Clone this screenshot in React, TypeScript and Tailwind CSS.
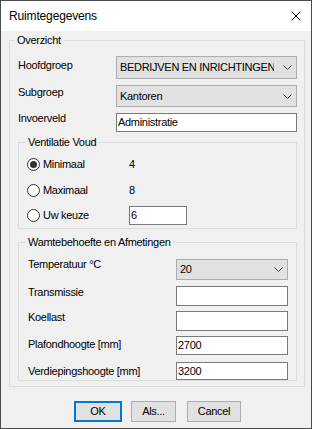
import React from 'react'

function Chevron() {
  return (
    <svg width="9" height="5" viewBox="0 0 9 5" className="mr-[4px] shrink-0">
      <polyline points="0.5,0.5 4.5,4.5 8.5,0.5" fill="none" stroke="#404040" strokeWidth="1" />
    </svg>
  )
}

function Combo({ value, className }: { value: string; className: string }) {
  return (
    <div className={`flex items-center border border-[#adadad] bg-[#e1e1e1] ${className}`}>
      <span className="min-w-0 flex-1 overflow-hidden whitespace-nowrap pl-[3px] mr-[9px]">{value}</span>
      <Chevron />
    </div>
  )
}

function TextBox({ value = '', className }: { value?: string; className: string }) {
  return (
    <div className={`flex items-center border border-[#7a7a7a] bg-white pl-[1px] ${className}`}>
      {value}
    </div>
  )
}

function Radio({ label, checked }: { label: string; checked?: boolean }) {
  return (
    <div className="flex w-[102px] items-center gap-[3px]">
      <div className="flex h-[13px] w-[13px] items-center justify-center rounded-full border border-[#333333] bg-white">
        {checked && <div className="h-[7px] w-[7px] rounded-full bg-[#333333]" />}
      </div>
      <span>{label}</span>
    </div>
  )
}

function Button({ label, width, primary }: { label: string; width: string; primary?: boolean }) {
  return (
    <div
      className={`flex h-[21px] items-center justify-center bg-[#e1e1e1] ${width} ${
        primary ? 'border-2 border-[#0078d7]' : 'border border-[#adadad]'
      }`}
    >
      {label}
    </div>
  )
}

export default function App() {
  return (
    <div className="flex h-[429px] w-[312px] flex-col border border-[#4a4a4a] bg-[#f0f0f0] font-['Liberation_Sans',Arial,sans-serif] text-[11px] leading-[13px] tracking-[-0.3px] text-black">
      {/* Title bar */}
      <div className="flex h-[30px] shrink-0 items-center bg-white pl-[8px] pr-[10px]">
        <span className="text-[12px] tracking-[-0.15px]">Ruimtegegevens</span>
        <svg width="10" height="10" viewBox="0 0 10 10" className="ml-auto">
          <path d="M0.5 0.5 L9.5 9.5 M9.5 0.5 L0.5 9.5" stroke="#000" strokeWidth="1" />
        </svg>
      </div>

      {/* Overzicht */}
      <fieldset className="ml-[8px] mt-[3px] w-[296px] border border-[#dcdcdc]">
        <legend className="ml-[5px] px-[2px]">Overzicht</legend>
        <div className="pb-[5px] pl-[8px] pt-[9px]">
          <div className="flex items-start">
            <span className="mt-[3px] w-[98px]">Hoofdgroep</span>
            <Combo value="BEDRIJVEN EN INRICHTINGEN" className="h-[23px] w-[181px]" />
          </div>
          <div className="mt-[6px] flex items-start">
            <span className="mt-[1px] w-[98px]">Subgroep</span>
            <Combo value="Kantoren" className="h-[22px] w-[181px]" />
          </div>
          <div className="mt-[6px] flex items-start">
            <span className="-mt-px w-[98px]">Invoerveld</span>
            <TextBox value="Administratie" className="h-[19px] w-[181px]" />
          </div>

          {/* Ventilatie Voud */}
          <fieldset className="mt-[4px] w-[279px] border border-[#dcdcdc]">
            <legend className="ml-[7px] px-[2px]">Ventilatie Voud</legend>
            <div className="pt-[3px]">
              <div className="flex h-[25px] items-center pl-[8px]">
                <Radio label="Minimaal" checked />
                <span>4</span>
              </div>
              <div className="flex h-[26px] items-center pl-[8px]">
                <Radio label="Maximaal" />
                <span>8</span>
              </div>
              <div className="flex h-[25px] items-center pl-[8px]">
                <Radio label="Uw keuze" />
                <TextBox value="6" className="h-[19px] w-[58px]" />
              </div>
            </div>
          </fieldset>

          {/* Warmtebehoefte */}
          <fieldset className="mt-[7px] w-[279px] border border-[#dcdcdc]">
            <legend className="ml-[7px] px-[2px]">Wamtebehoefte en Afmetingen</legend>
            <div className="pl-[9px] pt-[10px]">
              <div className="flex items-start">
                <span className="-mt-px w-[148px]">Temperatuur °C</span>
                <Combo value="20" className="h-[21px] w-[112px]" />
              </div>
              <div className="mt-[6px] flex items-start">
                <span className="w-[148px]">Transmissie</span>
                <TextBox className="h-[20px] w-[112px]" />
              </div>
              <div className="mt-[5px] flex items-start">
                <span className="w-[148px]">Koellast</span>
                <TextBox className="h-[20px] w-[112px]" />
              </div>
              <div className="mt-[5px] flex items-start">
                <span className="mt-[2px] w-[148px]">Plafondhoogte [mm]</span>
                <TextBox value="2700" className="h-[19px] w-[112px]" />
              </div>
              <div className="mt-[7px] flex items-start">
                <span className="mt-[3px] w-[148px]">Verdiepingshoogte [mm]</span>
                <TextBox value="3200" className="h-[18px] w-[112px]" />
              </div>
            </div>
          </fieldset>
        </div>
      </fieldset>

      {/* Buttons */}
      <div className="mt-[14px] flex pl-[73px]">
        <Button label="OK" width="w-[48px]" primary />
        <div className="ml-[9px]">
          <Button label="Als..." width="w-[45px]" />
        </div>
        <div className="ml-[11px]">
          <Button label="Cancel" width="w-[54px]" />
        </div>
      </div>
    </div>
  )
}
